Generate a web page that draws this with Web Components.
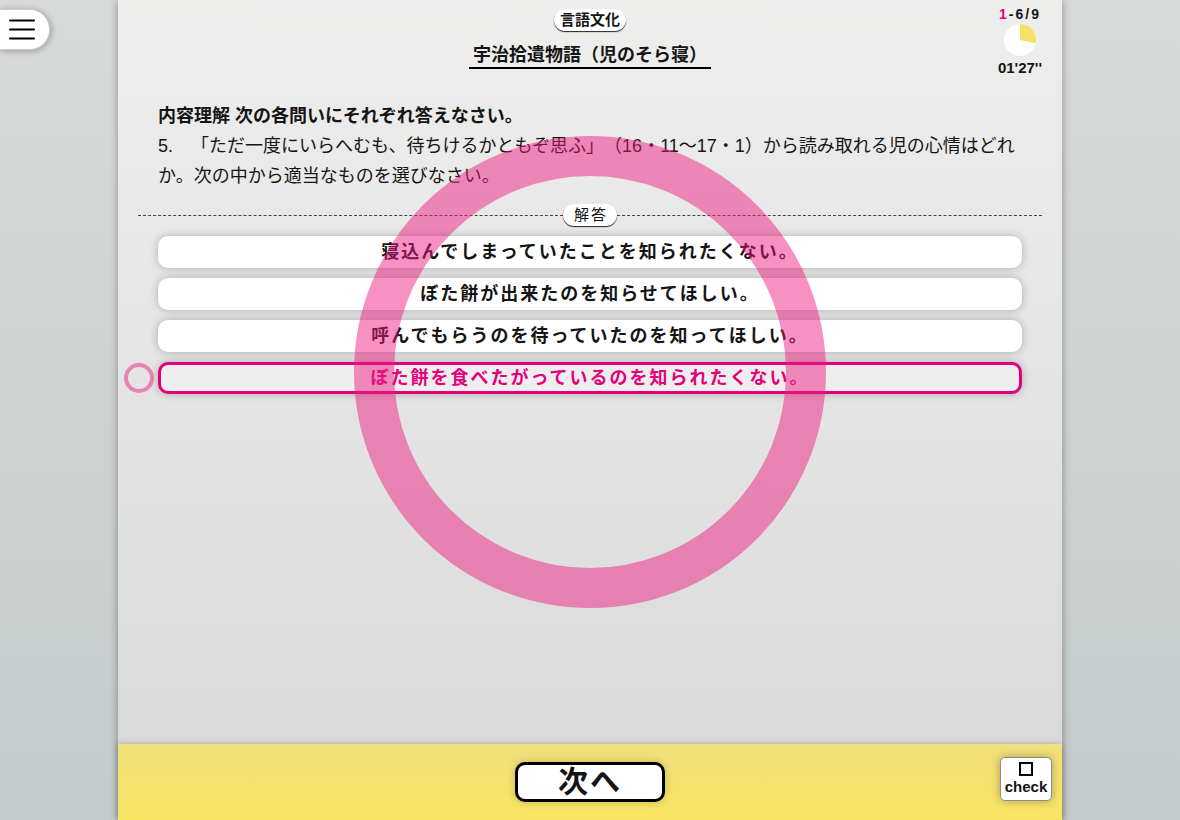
<!DOCTYPE html>
<html lang="ja">
<head>
<meta charset="utf-8">
<meta name="viewport" content="width=device-width, initial-scale=1">
<title>宇治拾遺物語（児のそら寝）</title>
<style>
  html, body {
    height: 100%;
    margin: 0;
  }
  body {
    --accent: #e4007c;
    --ring: rgba(239, 26, 128, 0.48);
    --ink: #151515;
    background: linear-gradient(#d8dad9, #c4cbca);
    color: var(--ink);
    font: 18px/30px "Liberation Sans", "Noto Sans CJK JP", sans-serif;
    text-spacing-trim: space-all;
  }
</style>
</head>
<body>
<quiz-app>
  <menu-button slot="menu"></menu-button>
  <quiz-header slot="header">
    <span slot="subject">言語文化</span>
    <span slot="title">宇治拾遺物語（児のそら寝）</span>
    <quiz-status slot="status" round="1" count="-6/9" time="01'27''" elapsed="102"></quiz-status>
  </quiz-header>
  <quiz-question>
    <span slot="lead">内容理解 次の各問いにそれぞれ答えなさい。</span>
    5.　「ただ一度にいらへむも、待ちけるかともぞ思ふ」（16・11〜17・1）から読み取れる児の心情はどれか。次の中から適当なものを選びなさい。
  </quiz-question>
  <answer-divider>解答</answer-divider>
  <answer-list>
    <answer-option>寝込んでしまっていたことを知られたくない。</answer-option>
    <answer-option>ぼた餅が出来たのを知らせてほしい。</answer-option>
    <answer-option>呼んでもらうのを待っていたのを知ってほしい。</answer-option>
    <answer-option correct>ぼた餅を食べたがっているのを知られたくない。</answer-option>
  </answer-list>
  <result-ring slot="result"></result-ring>
  <quiz-footer slot="footer">
    <span>次へ</span>
    <check-toggle slot="check">check</check-toggle>
  </quiz-footer>
</quiz-app>

<template id="quiz-app">
  <style>
    :host {
      display: flex;
      justify-content: center;
      min-height: 100vh;
    }
    .sheet {
      width: 80%;
      display: flex;
      flex-direction: column;
      background: linear-gradient(#eeeeed, #d7d9d8);
      box-shadow: 0 0 8px rgba(0, 0, 0, 0.35);
    }
    main {
      position: relative;
      flex: 1;
    }
    .menu {
      position: absolute;
      top: 9px;
      left: 0;
    }
  </style>
  <div class="menu"><slot name="menu"></slot></div>
  <div class="sheet">
    <main>
      <slot name="header"></slot>
      <slot></slot>
      <slot name="result"></slot>
    </main>
    <slot name="footer"></slot>
  </div>
</template>

<template id="menu-button">
  <style>
    :host { display: block; }
    button {
      display: flex;
      align-items: center;
      width: 50px;
      height: 41px;
      padding: 0 0 0 9px;
      border: 1px solid #c9cccb;
      border-left: 0;
      border-radius: 0 20px 20px 0;
      background: #fff;
      box-shadow: 1px 1px 6px rgba(0, 0, 0, 0.3);
      cursor: pointer;
    }
    svg { display: block; }
  </style>
  <button type="button" aria-label="メニュー">
    <svg width="26" height="21" viewBox="0 0 26 21" stroke="#000" stroke-width="2" stroke-linecap="round">
      <path d="M1 1.5h24M1 10.5h24M1 19.5h24"/>
    </svg>
  </button>
</template>

<template id="quiz-header">
  <style>
    :host {
      display: grid;
      grid-template-columns: 1fr auto 1fr;
      padding: 0 20px;
      height: 101px;
      box-sizing: border-box;
    }
    .titles {
      grid-column: 2;
      display: flex;
      flex-direction: column;
      align-items: center;
      padding-top: 9px;
    }
    .subject {
      padding: 0 6px;
      border-radius: 12px;
      background: #fff;
      box-shadow: 0 1px 1px #222;
      font-size: 15px;
      font-weight: bold;
      line-height: 22px;
    }
    h1 {
      margin: 12px 0 0;
      padding: 0 4px;
      border-bottom: 2px solid #000;
      font-size: 18px;
      line-height: 24px;
    }
    .status { justify-self: end; }
  </style>
  <div class="titles">
    <div class="subject"><slot name="subject"></slot></div>
    <h1><slot name="title"></slot></h1>
  </div>
  <div class="status"><slot name="status"></slot></div>
</template>

<template id="quiz-status">
  <style>
    :host {
      display: flex;
      flex-direction: column;
      align-items: center;
      padding-top: 6px;
      font-size: 14px;
      font-weight: bold;
      line-height: 16px;
    }
    .progress { letter-spacing: 2px; }
    .round { color: var(--accent); }
    .time { font-size: 15px; }
    svg {
      display: block;
      margin: 2px 0 4px;
    }
  </style>
  <div class="progress"><span class="round"></span><span class="count"></span></div>
  <svg width="32" height="32" viewBox="0 0 32 32" aria-hidden="true">
    <circle cx="16" cy="16" r="16" fill="#fff"/>
    <path fill="#f5e163"/>
  </svg>
  <div class="time"></div>
</template>

<template id="quiz-question">
  <style>
    :host {
      display: block;
      padding: 0 40px;
    }
    h2, p {
      margin: 0;
      font-size: 18px;
      line-height: 30px;
    }
  </style>
  <h2><slot name="lead"></slot></h2>
  <p><slot></slot></p>
</template>

<template id="answer-divider">
  <style>
    :host {
      display: flex;
      align-items: center;
      margin: 13px 20px 10px;
    }
    :host::before, :host::after {
      content: "";
      flex: 1;
      border-top: 1px dashed #444;
    }
    span {
      padding: 0 9px 0 11px;
      border-radius: 12px;
      background: #fff;
      box-shadow: 0 1px 1px #222;
      font-size: 15px;
      letter-spacing: 2px;
      line-height: 22px;
    }
  </style>
  <span><slot></slot></span>
</template>

<template id="answer-list">
  <style>
    :host {
      display: flex;
      flex-direction: column;
      gap: 10px;
      padding: 0 40px;
    }
  </style>
  <slot></slot>
</template>

<template id="answer-option">
  <style>
    :host {
      display: block;
      position: relative;
    }
    button {
      display: block;
      width: 100%;
      height: 32px;
      padding: 0;
      border: 0;
      border-radius: 10px;
      background: #fff;
      box-shadow: 0 0 8px rgba(0, 0, 0, 0.25);
      color: inherit;
      font: bold 18px/26px "Liberation Sans", "Noto Sans CJK JP", sans-serif;
      letter-spacing: 2px;
      cursor: pointer;
    }
    .mark {
      display: none;
      position: absolute;
      top: 1px;
      left: -34px;
      box-sizing: border-box;
      width: 30px;
      height: 30px;
      border: 4px solid var(--ring);
      border-radius: 50%;
    }
    :host([correct]) button {
      border: 3px solid var(--accent);
      background: #eeeeee;
      color: var(--accent);
    }
    :host([correct]) .mark { display: block; }
  </style>
  <span class="mark"></span>
  <button type="button"><slot></slot></button>
</template>

<template id="result-ring">
  <style>
    :host {
      display: flex;
      position: absolute;
      inset: 0;
      align-items: center;
      justify-content: center;
      pointer-events: none;
    }
    div {
      box-sizing: border-box;
      width: 50%;
      aspect-ratio: 1;
      border: 40px solid var(--ring);
      border-radius: 50%;
    }
  </style>
  <div></div>
</template>

<template id="quiz-footer">
  <style>
    :host {
      display: grid;
      grid-template-columns: 1fr auto 1fr;
      align-items: center;
      height: 76px;
      padding: 0 10px;
      background: linear-gradient(#f0df7b, #f9e461);
      box-shadow: 0 0 6px rgba(0, 0, 0, 0.25);
    }
    .next {
      grid-column: 2;
      width: 150px;
      height: 40px;
      padding: 0;
      border: 3px solid #000;
      border-radius: 10px;
      background: #fff;
      box-shadow: 0 0 8px rgba(0, 0, 0, 0.2);
      color: inherit;
      font: bold 30px/34px "Liberation Sans", "Noto Sans CJK JP", sans-serif;
      letter-spacing: 2px;
      cursor: pointer;
    }
    .check {
      align-self: start;
      justify-self: end;
      padding-top: 13px;
    }
  </style>
  <button class="next" type="button"><slot></slot></button>
  <div class="check"><slot name="check"></slot></div>
</template>

<template id="check-toggle">
  <style>
    :host { display: block; }
    label {
      display: flex;
      flex-direction: column;
      align-items: center;
      box-sizing: border-box;
      width: 52px;
      height: 44px;
      padding-top: 4px;
      border: 1px solid #8c8c96;
      border-radius: 5px;
      background: #fff;
      box-shadow: 0 0 8px rgba(0, 0, 0, 0.3);
      font-size: 15px;
      font-weight: bold;
      line-height: 22px;
      cursor: pointer;
    }
    input {
      appearance: none;
      flex: none;
      width: 14px;
      height: 14px;
      margin: 0;
      border: 2px solid #000;
    }
    input:checked { background: #000; }
  </style>
  <label><input type="checkbox"><slot></slot></label>
</template>

<script>
  (function() {
    class QuizElement extends HTMLElement {
      constructor() {
        super();
        const tmpl = document.getElementById(this.localName);
        this.attachShadow({mode: 'open'}).appendChild(tmpl.content.cloneNode(true));
      }
    }

    class QuizStatus extends QuizElement {
      connectedCallback() {
        const root = this.shadowRoot;
        root.querySelector('.round').textContent = this.getAttribute('round');
        root.querySelector('.count').textContent = this.getAttribute('count');
        root.querySelector('.time').textContent = this.getAttribute('time');
        // elapsed is the angle of the yellow slice, clockwise from the top
        const deg = Number(this.getAttribute('elapsed'));
        const rad = deg * Math.PI / 180;
        const x = 16 + 16 * Math.sin(rad);
        const y = 16 - 16 * Math.cos(rad);
        root.querySelector('path').setAttribute('d',
          `M16 16V0A16 16 0 ${deg > 180 ? 1 : 0} 1 ${x} ${y}Z`);
      }
    }

    class AnswerOption extends QuizElement {
      connectedCallback() {
        this.shadowRoot.querySelector('button')
          .setAttribute('aria-pressed', this.hasAttribute('correct'));
      }
    }

    customElements.define('quiz-app', class extends QuizElement {});
    customElements.define('menu-button', class extends QuizElement {});
    customElements.define('quiz-header', class extends QuizElement {});
    customElements.define('quiz-status', QuizStatus);
    customElements.define('quiz-question', class extends QuizElement {});
    customElements.define('answer-divider', class extends QuizElement {});
    customElements.define('answer-list', class extends QuizElement {});
    customElements.define('answer-option', AnswerOption);
    customElements.define('result-ring', class extends QuizElement {});
    customElements.define('quiz-footer', class extends QuizElement {});
    customElements.define('check-toggle', class extends QuizElement {});
  })();
</script>
</body>
</html>
